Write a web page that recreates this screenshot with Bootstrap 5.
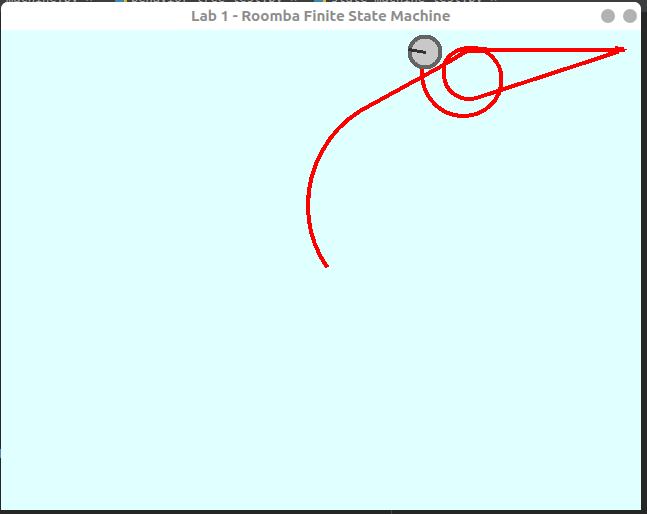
<!DOCTYPE html>
<html lang="en">
<head>
<meta charset="utf-8">
<meta name="viewport" content="width=device-width, initial-scale=1">
<title>Lab 1 - Roomba Finite State Machine</title>
<link href="https://cdn.jsdelivr.net/npm/bootstrap@5.3.0/dist/css/bootstrap.min.css" rel="stylesheet">
<style>
  .desk { width: 647px; height: 514px; background: linear-gradient(#3b3d3f 0 12px, #262626 12px); }
  .editor-tabs { left: 0; top: -10px; height: 16px; width: 647px; background: #3b3d3f; color: #b4b4b4;
    font: 12px/16px "DejaVu Sans Mono", monospace; white-space: pre; }
  .editor-tabs span { left: var(--x); top: 0; }
  .py-dot { width: 12px; height: 14px; top: 0; background: linear-gradient(90deg, #3d86ad 75%, #d9b92e 75%); border-radius: 3px; left: var(--x); }
  .edge-mark { left: 0; top: 449px; width: 1px; height: 9px; background: #5c86b5; }
  .bottom-mark { left: 391px; top: 510px; width: 1px; height: 4px; background: #484848; }
  .app-window { width: 640px; height: 508px; margin: 2px 0 0 1px; border-radius: 7px 7px 0 0; background: #e0ffff; }
  .title-strip { height: 28px; }
  .title-text { font: bold 14px/28px Ubuntu, "Noto Sans", sans-serif; }
  .win-dot { width: 14.5px; height: 14.5px; background: #b2b2b2; }
  .win-dots { right: 4px; top: 6.5px; gap: 7.5px; }
</style>
<script src="https://cdn.jsdelivr.net/npm/bootstrap@5.3.0/dist/js/bootstrap.bundle.min.js"></script>
</head>
<body class="m-0 overflow-hidden">
<div class="desk position-relative overflow-hidden d-flex align-items-start">
  <div class="editor-tabs position-absolute" aria-hidden="true">
    <span class="position-absolute" style="--x:6px">machine.py ×</span>
    <i class="py-dot position-absolute" style="--x:115px"></i>
    <span class="position-absolute" style="--x:131px">behavior_tree_test.py ×</span>
    <i class="py-dot position-absolute" style="--x:314px"></i>
    <span class="position-absolute" style="--x:331px">state_machine_test.py ×</span>
  </div>
  <div class="edge-mark position-absolute"></div>
  <div class="bottom-mark position-absolute"></div>
  <main class="app-window position-relative overflow-hidden d-flex flex-column">
    <header class="title-strip position-relative bg-white d-flex justify-content-center flex-shrink-0">
      <svg class="d-block" width="640" height="28" role="heading" aria-level="1">
        <text class="title-text" x="190" y="19" textLength="259.5" lengthAdjust="spacingAndGlyphs" fill="#8c8c8c">Lab 1 - Roomba Finite State Machine</text>
      </svg>
      <div class="win-dots position-absolute d-flex">
        <span class="win-dot rounded-circle"></span>
        <span class="win-dot rounded-circle"></span>
      </div>
    </header>
    <svg class="d-block flex-shrink-0" width="640" height="480" viewBox="1 30 640 480" shape-rendering="crispEdges">
      <!-- trail of the robot -->
      <g fill="none" stroke="#f00" stroke-width="4" stroke-linejoin="round">
        <path d="M327.500 267.500C315 250 308 230 308 206C308 167 328 131 360 111L440 67L467 51H486"/>
        <path d="M484 50H620"/>
        <path d="M619 51.500L478 97.500C461 103 444 92 444 74V66C446 56 457 48 470 48C487 47 501.500 62 501.500 79C501.500 101 484 116 463 116C440 116 422 96 422 74V64"/>
        <path d="M452 60L466 51L473 49H487"/>
      </g>
      <path d="M608 48H615V46H618V47H624V49H627V50H625V52H618V53H608Z" fill="#f00"/>
      <!-- robot body and heading -->
      <circle cx="425" cy="52" r="15.500" fill="#c8c8c8" stroke="#646464" stroke-width="4"/>
      <path d="M408.500 49.500L426 52.500" stroke="#323232" stroke-width="3"/>
    </svg>
  </main>
</div>
</body>
</html>
